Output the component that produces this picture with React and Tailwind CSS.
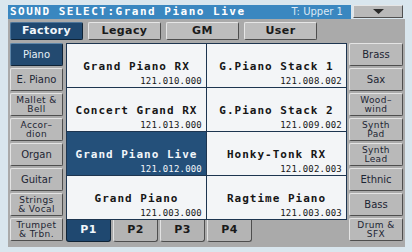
import React from "react";

const sans = { fontFamily: '"DejaVu Sans", sans-serif' };
const mono = { fontFamily: '"DejaVu Sans Mono", monospace' };

function SideBtn({ lines, active }) {
  return (
    <div
      className={
        "h-[23px] w-full flex flex-col items-center justify-center rounded-[2px] border " +
        (active
          ? "bg-[#234a70] text-[#e6f0f8] border-t-[#5f86a8] border-l-[#5f86a8] border-r-[#0f2336] border-b-[#0f2336]"
          : "bg-[#b9b9b9] text-[#1d2533] border-t-[#e4e4e4] border-l-[#e4e4e4] border-r-[#4e4e4e] border-b-[#4e4e4e]")
      }
      style={sans}
    >
      {lines.length === 1 ? (
        <span className="text-[10px] leading-[11px]">{lines[0]}</span>
      ) : (
        lines.map((l, i) => (
          <span
            key={i}
            className="block h-[9px] text-[9px] leading-[9px] tracking-[0.4px] whitespace-nowrap"
          >
            {l}
          </span>
        ))
      )}
    </div>
  );
}

function Tab({ label, active }) {
  return (
    <div
      className={
        "w-[73px] h-[18px] flex items-center justify-center rounded-[2px] border font-bold text-[11px] tracking-[0.4px] " +
        (active
          ? "bg-[#1f4870] text-[#f0f6fb] border-t-[#4d759a] border-l-[#4d759a] border-r-[#0f2336] border-b-[#0f2336]"
          : "bg-[#bdbdbd] text-[#1a1a1a] border-t-[#e6e6e6] border-l-[#e6e6e6] border-r-[#4e4e4e] border-b-[#4e4e4e]")
      }
      style={sans}
    >
      {label}
    </div>
  );
}

function Cell({ name, num, active }) {
  return (
    <div
      className={
        "h-[43px] flex flex-col pt-[17px] " +
        (active ? "bg-[#24507a] text-[#f2f7fb]" : "bg-[#f3f5f7] text-[#161616]")
      }
    >
      <div
        className="text-center font-bold text-[11px] leading-[12px] tracking-[1px] whitespace-nowrap"
        style={mono}
      >
        {name}
      </div>
      <div
        className="text-right text-[9px] leading-[10px] mt-[3px] pr-[4px] tracking-[0.2px]"
        style={mono}
      >
        {num}
      </div>
    </div>
  );
}

function PageTab({ label, active }) {
  return (
    <div
      className={
        "w-[45px] h-[22px] flex items-center justify-center rounded-b-[3px] border border-t-0 font-bold text-[11px] tracking-[0.5px] " +
        (active
          ? "bg-[#1f4870] text-[#f0f6fb] border-[#0f2336]"
          : "bg-[#b4b4b4] text-[#1a1a1a] border-l-[#e2e2e2] border-r-[#4e4e4e] border-b-[#4e4e4e]")
      }
      style={sans}
    >
      {label}
    </div>
  );
}

export default function App() {
  const left = [
    ["Piano"],
    ["E. Piano"],
    ["Mallet &", "Bell"],
    ["Accor–", "dion"],
    ["Organ"],
    ["Guitar"],
    ["Strings", "& Vocal"],
    ["Trumpet", "& Trbn."],
  ];
  const right = [
    ["Brass"],
    ["Sax"],
    ["Wood–", "wind"],
    ["Synth", "Pad"],
    ["Synth", "Lead"],
    ["Ethnic"],
    ["Bass"],
    ["Drum &", "SFX"],
  ];
  const cells = [
    ["Grand Piano RX", "121.010.000"],
    ["G.Piano Stack 1", "121.008.002"],
    ["Concert Grand RX", "121.013.000"],
    ["G.Piano Stack 2", "121.009.002"],
    ["Grand Piano Live", "121.012.000", true],
    ["Honky-Tonk RX", "121.002.003"],
    ["Grand Piano", "121.003.000"],
    ["Ragtime Piano", "121.003.003"],
  ];
  return (
    <div className="w-[412px] h-[252px] bg-[#d9e6ee] pt-[5px] pl-[8px] pr-[7px] pb-[5px] flex flex-col overflow-hidden">
      <div className="flex h-[14px] shrink-0">
        <div className="w-[343px] h-[14px] bg-[#3a87c0] flex items-center justify-between pl-[2px] pr-[8px]">
          <span
            className="text-white font-bold text-[11px] leading-[14px] tracking-[1.5px] whitespace-nowrap"
            style={mono}
          >
            SOUND SELECT:Grand Piano Live
          </span>
          <span className="text-[#dbe9f5] text-[10px] leading-[14px] whitespace-nowrap" style={sans}>
            T: Upper 1
          </span>
        </div>
        <div className="ml-[2px] w-[50px] h-[13px] bg-[#b9b9b9] border border-t-[#e6e6e6] border-l-[#e6e6e6] border-r-[#505050] border-b-[#505050] flex items-center justify-center">
          <svg width="11" height="5" viewBox="0 0 11 5">
            <polygon points="0,0 11,0 5.5,5" fill="#2a2a2a" />
          </svg>
        </div>
      </div>
      <div className="flex-1 bg-[#aaaaaa] pl-[2px] pr-[2px] pt-[3px] flex flex-col">
        <div className="flex gap-[5px] h-[18px]">
          <Tab label="Factory" active />
          <Tab label="Legacy" />
          <Tab label="GM" />
          <Tab label="User" />
        </div>
        <div className="flex mt-[3px]">
          <div className="w-[53px] flex flex-col gap-[2px]">
            {left.map((l, i) => (
              <SideBtn key={i} lines={l} active={i === 0} />
            ))}
          </div>
          <div className="w-[281px] ml-[3px] flex flex-col">
            <div className="grid grid-cols-2 gap-px p-px bg-[#1d3550] h-[177px]">
              {cells.map((c, i) => (
                <Cell key={i} name={c[0]} num={c[1]} active={c[2]} />
              ))}
            </div>
            <div className="flex gap-[2px] h-[22px]">
              <PageTab label="P1" active />
              <PageTab label="P2" />
              <PageTab label="P3" />
              <PageTab label="P4" />
            </div>
          </div>
          <div className="w-[54px] ml-[2px] flex flex-col gap-[2px]">
            {right.map((l, i) => (
              <SideBtn key={i} lines={l} />
            ))}
          </div>
        </div>
      </div>
    </div>
  );
}
